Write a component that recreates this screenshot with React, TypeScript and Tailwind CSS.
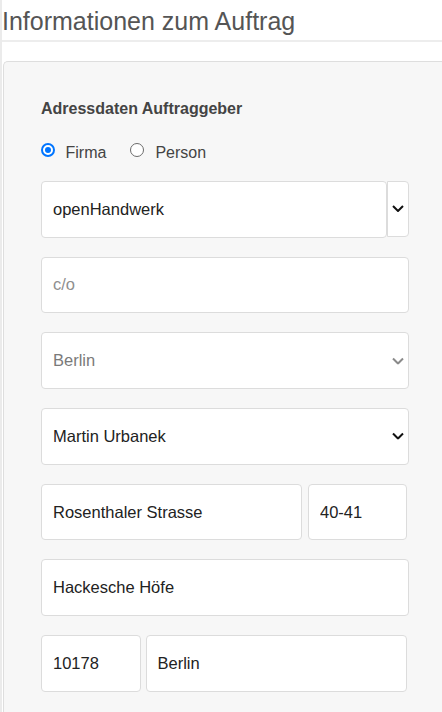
import React from 'react';

const Chevron: React.FC<{ className?: string }> = ({ className }) => (
  <svg width="12" height="7" viewBox="0 0 12 7" className={className} fill="none">
    <path d="M1 1l5 5 5-5" stroke="currentColor" strokeWidth="2" />
  </svg>
);

const Radio: React.FC<{ checked?: boolean }> = ({ checked }) =>
  checked ? (
    <span className="w-[14px] h-[14px] rounded-full border-2 border-[#0075ff] bg-white flex items-center justify-center">
      <span className="w-[6px] h-[6px] rounded-full bg-[#0075ff]" />
    </span>
  ) : (
    <span className="w-[14px] h-[14px] rounded-full border-[1.5px] border-[#6b6b6b] bg-white" />
  );

// base look of every field; width and text colour are added per field
const box =
  'h-full min-w-0 rounded-[4px] border border-[#dcdcdc] bg-white pl-[11px] text-[16.5px] outline-none';

const SelectBox: React.FC<{ value: string; disabled?: boolean }> = ({ value, disabled }) => (
  <div className="relative h-[56.5px]">
    <select
      defaultValue={value}
      disabled={disabled}
      className={`${box} w-full appearance-none ${disabled ? 'text-[#7a7a7a]' : 'text-[#222]'}`}
    >
      <option>{value}</option>
    </select>
    <Chevron
      className={`absolute right-[5px] top-1/2 -translate-y-1/2 pointer-events-none ${
        disabled ? 'text-[#8a8a8a]' : 'text-[#111]'
      }`}
    />
  </div>
);

const App: React.FC = () => {
  return (
    <div className="min-h-screen bg-white border-l-2 border-[#ebebeb] font-['Liberation_Sans',Arial,sans-serif]">
      {/* Title */}
      <div className="h-[42px] border-b-2 border-[#ededed] pt-[8px]">
        <h1 className="text-[25px] leading-[26px] text-[#555]">Informationen zum Auftrag</h1>
      </div>

      {/* Panel */}
      <div className="mt-[19px] ml-px border border-r-0 border-[#dedede] rounded-tl-[5px] bg-[#f7f7f7] pl-[37px] pt-[37px] pb-[40px]">
        <h2 className="text-[16px] leading-[20px] font-bold text-[#444]">Adressdaten Auftraggeber</h2>

        <div className="mt-[24px] flex items-start h-[20px] text-[16px] leading-[20px] text-[#444]">
          <label className="flex items-start">
            <Radio checked />
            <span className="ml-[10.5px]">Firma</span>
          </label>
          <label className="flex items-start ml-[24px]">
            <Radio />
            <span className="ml-[11px]">Person</span>
          </label>
        </div>

        <div className="mt-[18px] w-[368px] flex flex-col gap-[19.2px]">
          {/* Firma mit Auswahl */}
          <div className="flex h-[56.5px]">
            <input readOnly defaultValue="openHandwerk" className={`${box} flex-1 text-[#222]`} />
            <div className="w-[22.5px] h-[55.5px] border border-[#dcdcdc] rounded-r-[4px] bg-white flex items-center justify-center text-[#111]">
              <Chevron />
            </div>
          </div>

          <div className="h-[56.5px] flex">
            <input placeholder="c/o" className={`${box} flex-1 text-[#222] placeholder:text-[#8f8f8f]`} />
          </div>

          <SelectBox value="Berlin" disabled />
          <SelectBox value="Martin Urbanek" />

          <div className="flex w-[366px] h-[56.5px] gap-[6px]">
            <input readOnly defaultValue="Rosenthaler Strasse" className={`${box} flex-1 text-[#222]`} />
            <input readOnly defaultValue="40-41" className={`${box} w-[99px] flex-none text-[#222]`} />
          </div>

          <div className="h-[56.5px] flex">
            <input readOnly defaultValue="Hackesche Höfe" className={`${box} flex-1 text-[#222]`} />
          </div>

          <div className="flex w-[366px] h-[56.5px] gap-[4.5px]">
            <input readOnly defaultValue="10178" className={`${box} w-[100px] flex-none text-[#222]`} />
            <input readOnly defaultValue="Berlin" className={`${box} flex-1 text-[#222]`} />
          </div>
        </div>
      </div>
    </div>
  );
};

export default App;
